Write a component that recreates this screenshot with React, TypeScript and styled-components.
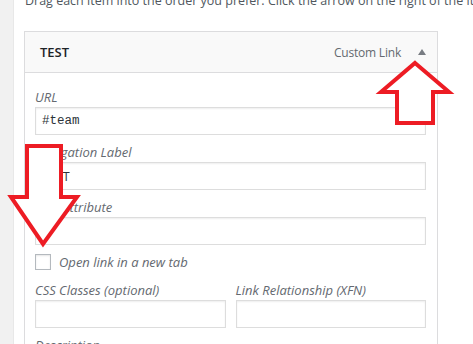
import React from 'react';
import styled, { createGlobalStyle } from 'styled-components';

const GlobalStyle = createGlobalStyle`
  html, body {
    margin: 0;
    padding: 0;
    background: #fff;
    overflow: hidden;
  }
  body {
    font-family: 'Open Sans', 'Noto Sans', sans-serif;
    font-size: 13px;
    color: #3c434a;
  }
`;

const Page = styled.div`
  position: relative;
  display: flex;
  width: 473px;
  height: 344px;
  overflow: hidden;
`;

const SideStrip = styled.div`
  width: 13px;
  flex: none;
  background: #f1f1f1;
  border-right: 1px solid #e8e8e8;
`;

const Main = styled.div`
  flex: 1;
  padding-left: 10px;
`;

const Intro = styled.p`
  margin: -8px 0 0 1px;
  font-size: 12.5px;
  line-height: 18px;
  white-space: nowrap;
  color: #50575e;
`;

const MenuItem = styled.div`
  width: 412px;
  margin-top: 21px;
  border: 1px solid #dcdcde;
  border-bottom: none;
`;

const Header = styled.div`
  height: 40px;
  display: flex;
  align-items: center;
  justify-content: space-between;
  padding: 0 11px 0 15px;
  background: #f9f9f9;
  border-bottom: 1px solid #dcdcde;
`;

const ItemTitle = styled.span`
  font-weight: 600;
  color: #1d2327;
`;

const ItemControls = styled.div`
  display: flex;
  align-items: center;
  gap: 17px;
  font-size: 12px;
  letter-spacing: -0.2px;
  color: #646970;
`;

const Toggle = styled.span`
  width: 0;
  height: 0;
  margin-top: -1px;
  border-left: 4.5px solid transparent;
  border-right: 4.5px solid transparent;
  border-bottom: 6px solid #787c82;
`;

const Settings = styled.div`
  padding: 15px 11px 0 10px;
`;

const Field = styled.div`
  margin-bottom: 8px;
`;

const Label = styled.div`
  font-style: italic;
  line-height: 18px;
  margin-bottom: 1px;
  color: #646970;
  white-space: nowrap;
`;

const Input = styled.div<{ $mono?: boolean }>`
  box-sizing: border-box;
  height: 28px;
  display: flex;
  align-items: center;
  padding: 0 6px;
  border: 1px solid #dddddd;
  box-shadow: inset 0 1px 2px rgba(0, 0, 0, 0.07);
  color: #2c3338;
  font-family: ${({ $mono }) =>
    $mono ? "'Liberation Mono', monospace" : "'Open Sans', 'Noto Sans', sans-serif"};
  font-size: 12.5px;
`;

const CheckRow = styled.label`
  display: flex;
  align-items: center;
  gap: 8px;
  height: 16px;
  margin: 9px 0 11px;
  font-style: italic;
  color: #646970;
`;

const Checkbox = styled.span`
  box-sizing: border-box;
  width: 16px;
  height: 16px;
  border: 1px solid #b4b9be;
  box-shadow: inset 0 1px 2px rgba(0, 0, 0, 0.1);
`;

const Columns = styled.div`
  display: grid;
  grid-template-columns: 1fr 1fr;
  gap: 10px;
`;

const Callout = styled.svg<{ $left: number; $top: number }>`
  position: absolute;
  left: ${({ $left }) => $left}px;
  top: ${({ $top }) => $top}px;
  overflow: visible;
`;

const RED = '#ed1c24';

export default function App() {
  return (
    <>
      <GlobalStyle />
      <Page>
        <SideStrip />
        <Main>
          <Intro>
            Drag each item into the order you prefer. Click the arrow on the right of the item to reveal
            additional configuration options.
          </Intro>
          <MenuItem>
            <Header>
              <ItemTitle>TEST</ItemTitle>
              <ItemControls>
                <span>Custom Link</span>
                <Toggle />
              </ItemControls>
            </Header>
            <Settings>
              <Field>
                <Label>URL</Label>
                <Input $mono>#team</Input>
              </Field>
              <Field>
                <Label>Navigation Label</Label>
                <Input>TEST</Input>
              </Field>
              <Field>
                <Label>Title Attribute</Label>
                <Input />
              </Field>
              <CheckRow>
                <Checkbox />
                Open link in a new tab
              </CheckRow>
              <Columns>
                <Field>
                  <Label>CSS Classes (optional)</Label>
                  <Input />
                </Field>
                <Field>
                  <Label>Link Relationship (XFN)</Label>
                  <Input />
                </Field>
              </Columns>
              <Field>
                <Label>Description</Label>
              </Field>
            </Settings>
          </MenuItem>
        </Main>

        <Callout $left={375} $top={55} width={82} height={73}>
          <polygon
            points="40,8 74,37 58,37 58,68 22,68 22,37 6,37"
            fill="#fff"
            stroke={RED}
            strokeWidth={4}
          />
        </Callout>
        <Callout $left={5} $top={140} width={80} height={112}>
          <polygon
            points="22,6 56,6 56,57 72,57 38,104 6,57 22,57"
            fill="#fff"
            stroke={RED}
            strokeWidth={4}
          />
        </Callout>
      </Page>
    </>
  );
}
